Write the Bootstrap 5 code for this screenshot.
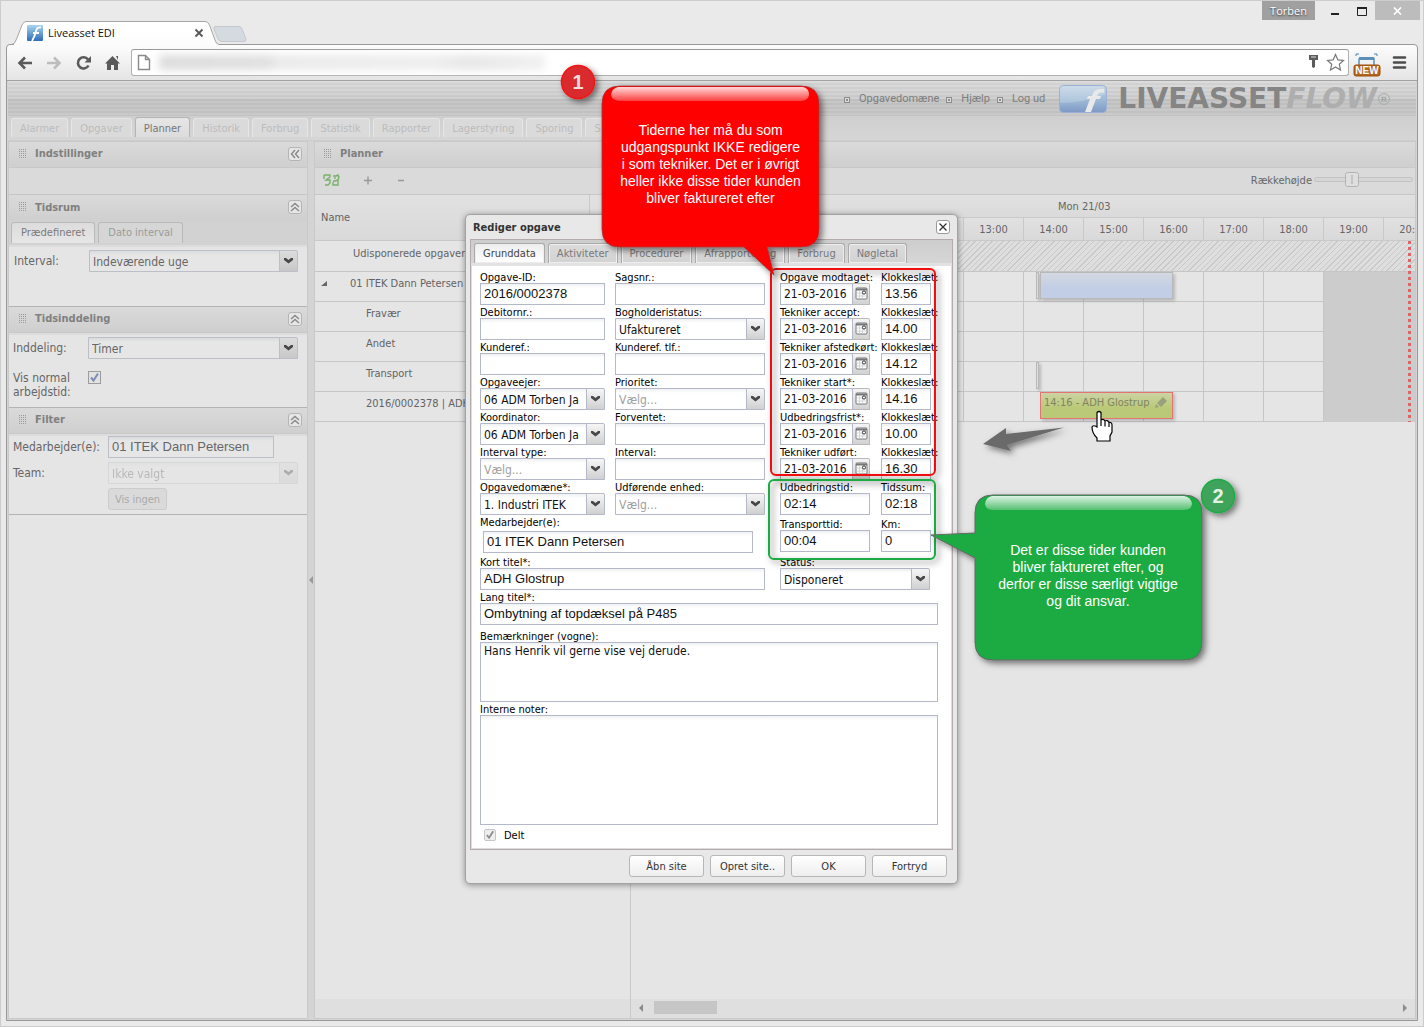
<!DOCTYPE html>
<html lang="da">
<head>
<meta charset="utf-8">
<meta name="viewport" content="width=device-width, initial-scale=1">
<title>Liveasset EDI</title>
<link href="https://cdn.jsdelivr.net/npm/bootstrap@5.3.0/dist/css/bootstrap.min.css" rel="stylesheet">
<style>
:root{--ui:"DejaVu Sans Condensed","DejaVu Sans",sans-serif;--alt:"Liberation Sans",Arial,sans-serif;--line:#c9c9c9;
--chev:url("data:image/svg+xml,%3Csvg xmlns='http://www.w3.org/2000/svg' viewBox='0 0 17 20'%3E%3Cpath d='M4 7h2l2.500 2L11 7h2v2L8.500 12.500 4 9z' fill='%23484848'/%3E%3C/svg%3E")}
body{font:11px/13px var(--ui);color:#666;background:#eaeaea}
button,input,select,textarea{font-family:inherit;border-radius:0}
a{text-decoration:none;color:inherit}
.desktop{border:1px solid #cdcdcd;padding:0 5px 5px;overflow:hidden}
.tabstrip{height:43px}
.btab{font:11px/14px "Open Sans",sans-serif;color:#111;margin-left:6px;width:240px;height:44px;z-index:1}
.btab .cap{padding:24px 0 0 15px;gap:5px}
.wctl .usr{width:53px;height:19px;background:#a0a0a0;color:#fff;font:11px/20px "Open Sans",sans-serif;text-shadow:0 1px 2px #333}
.wctl .cls{width:45px;height:19px;background:#bcbcbc;margin-right:-2px}
.frame{border:1px solid #999;border-radius:4px 4px 0 0;background:#d4d4d4}
.toolbar{height:36px;background:linear-gradient(#fdfdfd,#e4e4e4);border-bottom:1px solid #a3a3a3;padding:0 4px 0 10px;border-radius:4px 4px 0 0}
.addr{height:27px;border:1px solid #b0b0b0;border-top-color:#989898;border-radius:3px;background:#fff;margin:-1px 0 0 10px;padding:0 3px 0 5px}
.smudge{width:386px;height:15px;filter:blur(4px);background:linear-gradient(90deg,#dcdcdc 0,#dfdfdf 28%,#eaeaea 31%,#eee 70%,#e6e6e6 80%,#f0f0f0)}
.app{padding:0 1px 1px}
.apphead{height:35px;background:repeating-linear-gradient(#0000 0 2px,#0000000a 2px 4px),linear-gradient(#dcdcdc,#d0d0d0 50%,#c6c6c6 51%,#cacaca);color:#7d7d7d;padding-right:24px;font:11px/14px Roboto,sans-serif}
.sq{width:6px;height:6px;border:1px solid #8c8c8c;margin:3px 9px 0 7px;background:#8c8c8c;box-shadow:inset 0 0 0 1px #ddd}
.brandt{font:bold 28px/30px "DejaVu Sans",sans-serif;color:#858585}
.brandt i{color:#aeaeae}
.logo{margin:0 11px 0 14px}
.appnav{height:25px;padding:1px 3px 0;gap:3px;background:linear-gradient(#cfcfcf,#d6d6d6);border-bottom:1px solid #cdcdcd}
.atab{height:19px;padding:3px 8px 0;margin-top:1px;border:1px solid #e6e6e6;border-bottom:0;border-radius:3px 3px 0 0;background:#dadada;color:#bcbcbc;white-space:nowrap}
.atab.on{background:linear-gradient(#e6e6e6,#dcdcdc);border-color:#b4b4b4;color:#777;height:20px;margin-top:0;padding-top:4px}
.side{width:300px;background:#e5e5e5;border:1px solid var(--line)}
.gutter{width:6px;background:#d4d4d4}
.ph{height:26px;background:linear-gradient(#dadada,#cfcfcf);border-bottom:1px solid var(--line);font-weight:bold;font-size:11px;color:#808080;padding:0 5px 2px 9px}
.ph.drk{border-top:1px solid #b3b3b3;height:27px}
.grip{width:8px;height:10px;margin-right:9px;background-image:linear-gradient(90deg,#d5d5d5 50%,#0000 0),linear-gradient(#999 50%,#d5d5d5 0);background-size:2px 2px}
.tool{width:14px;height:14px;border:1px solid #b5b5b5;border-radius:3px;background:#e6e6e6;padding:0}
.tool svg{display:block}
.bar27{height:27px;background:#dadada;border-bottom:1px solid #c6c6c6}
.plan .bar27{padding-bottom:2px}
.stabs{height:24px;background:#d2d2d2;padding:1px 2px 0;gap:3px}
.stab{height:21px;border:1px solid #b9b9b9;border-bottom:0;border-radius:3px 3px 0 0;background:#d6d6d6;color:#9b9b9b;font-size:11px;padding:0 9px 2px}
.stab.on{background:linear-gradient(#dcdcdc,#e6e6e6);color:#7a7a7a}
.sbody{padding:2px 9px 8px 4px;font-size:12px;line-height:14px;border-top:2px solid #dcdcdc}
.sbody.range{padding:3px 9px 34px 5px}
.sbody.filt{padding:0 9px 4px 4px;border-bottom:1px solid #b3b3b3}
.k75{flex:0 0 75px}.k95{flex:0 0 95px}
.fld{height:22px;border:1px solid #b5b8c8;background:linear-gradient(#eef0f2,#fff 4px);font:12px/18px var(--ui);color:#111;padding:0 3px;display:block;width:100%}
.fld.al{font:13px/16px var(--alt);padding-bottom:2px}
select.fld{appearance:none;border-radius:0 2px 0 0;padding:1px 20px 0 3px;background:var(--chev) right center/17px 20px no-repeat,linear-gradient(#b5b8c8,#b5b8c8) right 17px top/1px 100% no-repeat,linear-gradient(#f6f6f6,#d0d0d0) right/17px 100% no-repeat,linear-gradient(#eef0f2,#fff 4px)}
.hint{color:#a0a0a0!important}
.side .fld{background-color:#e6e6e6;background-image:linear-gradient(#d9dbdd,#e6e6e6 4px);border-color:#bcbec8;color:#666}
.side select.fld{background-image:var(--chev),linear-gradient(#bcbec8,#bcbec8),linear-gradient(#dcdcdc,#c8c8c8),linear-gradient(#d9dbdd,#e6e6e6 4px)}
.side .off{opacity:.35}
.side .fb{margin-left:95px;width:59px;background:#dadada;border-color:#ccc;color:#aaa}
.tick{appearance:none;width:13px;height:13px;border:1px solid #9c9c9c;margin:0;background:#e2e2e2 url("data:image/svg+xml,%3Csvg xmlns='http://www.w3.org/2000/svg' viewBox='0 0 11 11'%3E%3Cpath d='M2 5.500 4.500 8.500 9 1.500' fill='none' stroke='%237f8db5' stroke-width='2'/%3E%3C/svg%3E")}
.tick.grey{width:12px;height:12px;border-color:#c6c6c6;border-radius:2px;background-color:#eee;filter:grayscale(1)}
.plan{background:#e5e5e5;border:1px solid var(--line);min-width:0}
.locked{width:316px;border-right:1px solid var(--line);color:#636363}
.locked .hd{height:46px;background:linear-gradient(#e1e1e1,#d9d9d9);border-bottom:1px solid var(--line);padding:0 6px}
.locked .hd span{width:269px;border-right:1px solid var(--line)}
.lrow{height:30px;border-bottom:1px solid #c6c6c6;padding:0 0 6px 51px;white-space:nowrap;overflow:hidden}
.lrow.tall{height:31px;padding-left:38px}
.lrow.top{padding-left:6px}
.time{overflow:hidden;color:#666}
.d1{height:23px;background:linear-gradient(#e1e1e1,#dadada);border-bottom:1px solid var(--line);padding-left:427px}
.d2{height:23px;background:linear-gradient(#e1e1e1,#d9d9d9);border-bottom:1px solid var(--line);overflow:hidden}
.d2 span{flex:0 0 60px;border-right:1px solid var(--line);text-align:center;padding-top:5px}
.d2 span:first-child{flex-basis:33px}
.rows{background:repeating-linear-gradient(90deg,#0000 0 59px,#c6c6c6 59px 60px) -27px 0}
.trow{height:30px;border-bottom:1px solid #c6c6c6}
.trow.hatch{height:31px;background:repeating-linear-gradient(135deg,#dedede 0 3px,#c9c9c9 3px 4px)}
.night{left:693px;right:0;top:31px;bottom:0;background:#ccc}
.nowl{left:777px;top:0;bottom:0;width:3px;background:repeating-linear-gradient(#e06464 0 3px,#0000 3px 6px)}
.ev{height:27px;border:1px solid #b8b8b8;box-shadow:2px 2px 3px #0003}
.hscroll{height:19px;background:#dfdfdf;padding:0 7px 2px}
.hscroll i{display:block;width:63px;height:13px;background:#c6c6c6}
.rail{width:99px;height:16px;margin:0 2px}
.dlg{left:464px;top:213px;width:493px;background:#e8e8e8;border:1px solid #a2a2a2;border-radius:5px;box-shadow:0 1px 6px #0006;padding:0 4px;color:#000}
.dlg .ttl{height:24px;font-weight:bold;font-size:11px;color:#333;padding:0 3px}
.ttl .tool{background:#fff;border-color:#999}
.dbody{border:1px solid #b5aaaa;background:#fff;box-shadow:inset 0 0 0 1px #ddd}
.dtabs{height:23px;background:linear-gradient(#cdcdcd,#d6d6d6);padding:3px 3px 0;gap:3px}
.dtab{height:20px;border:1px solid #aaa;border-bottom:0;border-radius:3px 3px 0 0;background:linear-gradient(#dcdcdc,#d2d2d2);box-shadow:inset 0 0 0 1px #eee;color:#777;font-size:11px;padding:0 8px}
.dtab.on{background:linear-gradient(#eee,#fff);color:#444}
.dform{border-top:3px solid #e2e2e2;padding:4px 14px 7px 9px}
.f label{display:block;height:13px;line-height:15px;white-space:nowrap}
.w300{width:300px}.w285{width:285px}.emp{width:270px;margin:3px 0 2px 3px}
.c1{width:125px}.c2{width:150px}.c3{width:90px}.c4{width:50px}
.g10{gap:10px}.g11{gap:11px}
.trip{margin:2px 0 3px}
.dt .fld{width:73px}
.cal{width:17px;height:22px;border:1px solid #b9b9b9;border-left:0;border-radius:0 2px 0 0;background:linear-gradient(#f4f4f4,#d2d2d2);padding:0 0 0 2px}
.cal svg{display:block}
.ta{resize:none;line-height:15px;padding-top:1px}
.fb{width:75px;height:22px;border:1px solid #b7b7b7;border-radius:3px;background:linear-gradient(#fff,#eee);font-size:11px;line-height:13px;color:#333;padding:0}
.acts{gap:6px;padding:5px 6px 6px}
.notes{inset:0;pointer-events:none}
.say{color:#fff;font:14px/17px var(--alt);text-align:center}
.say.one{left:600px;top:121px;width:219px}
.say.two{left:974px;top:541px;width:226px}
</style>
</head>
<body>
<div class="desktop min-vh-100 d-flex flex-column position-relative">

  <div class="tabstrip d-flex justify-content-between">
    <div class="btab position-relative">
      <svg class="position-absolute top-0 start-0" width="245" height="46" viewBox="0 0 245 46"><defs><linearGradient id="tg" x2="0" y2="1"><stop offset=".4" stop-color="#fff"/><stop offset="1" stop-color="#fbfbfb"/></linearGradient></defs><path d="M1 44.500Q3 43 5 37L10 24Q11.500 20.500 14 20.500H193Q196 20.500 197.500 24L203 39Q204 43 207 43.500V46H1z" fill="url(#tg)"/><path d="M0 43.500Q3 43 5 37L10 24Q11.500 20.500 14 20.500H193Q196 20.500 197.500 24L203 39Q204 43 207 43.500" fill="none" stroke="#a6a6a6"/><path d="M203 25.500H227Q229 25.500 230 28L234 38Q234 40.500 232 40.500H210Q207 40.500 206 38L202 28Q201.500 25.500 203 25.500z" fill="#d5dae1" stroke="#c4c8ce"/></svg>
      <div class="cap d-flex align-items-center position-relative">
        <svg width="16" height="16"><defs><linearGradient id="bl" x2="0" y2="1"><stop stop-color="#a8d5f2"/><stop offset="1" stop-color="#2e6db5"/></linearGradient></defs><rect width="16" height="16" rx="1" fill="url(#bl)"/><path d="M5 16Q8 11 9 6 10 2 14 2.500M6 8h6" fill="none" stroke="#fff" stroke-width="1.800"/></svg>
        <span>Liveasset EDI</span>
        <svg class="ms-auto me-5" width="10" height="10"><path d="M1.500 1.500l7 7m0-7l-7 7" stroke="#555" stroke-width="1.800"/></svg>
      </div>
    </div>
    <div class="wctl d-flex">
      <div class="usr text-center">Torben</div>
      <svg width="60" height="22"><path d="M16 13h8" stroke="#222" stroke-width="2"/><path d="M42.500 7v7.500h9V7" fill="none" stroke="#222"/><path d="M42 7h10" stroke="#222" stroke-width="2"/></svg>
      <div class="cls d-flex justify-content-center align-items-center"><svg width="9" height="8"><path d="M1 .5l7 7m0-7l-7 7" stroke="#fff" stroke-width="1.600"/></svg></div>
    </div>
  </div>

  <div class="frame flex-grow-1 d-flex flex-column">
    <div class="toolbar d-flex align-items-center">
      <svg width="104" height="20" fill="none" stroke="#5a5a5a" stroke-width="2.600"><path d="M15 10H3M8 4.500L2.500 10 8 15.500"/><path d="M30 10h12M37 4.500L42.500 10 37 15.500" stroke="#bdbdbd"/><path d="M71 6.500A5.600 5.600 0 1 0 71.500 12.500"/><path d="M74 3v6.500h-6.500z" fill="#5a5a5a" stroke="none"/><path d="M88 10.500L95.500 3l7.500 7.500h-2V17h-4v-5h-3v5h-4v-6.500z M99 3h2v4" fill="#5a5a5a" stroke="none"/></svg>
      <div class="addr flex-grow-1 d-flex align-items-center">
        <svg width="14" height="17"><path d="M1.500 1.500h7l4 4v10h-11zM8.500 1.500v4h4" fill="#fff" stroke="#8a8a8a" stroke-width="1.400"/></svg>
        <div class="smudge ms-2"></div>
        <svg class="ms-auto" width="37" height="18"><path d="M1 2h9v5H7v7l-1.500 1L4 14V7H1z" fill="#5b5b5b"/><path d="M3 4h5" stroke="#ddd"/><path d="M27.500 1.500l2.400 5.400 5.600.600-4.200 3.800 1.200 5.700-5-3-5 3 1.200-5.700-4.200-3.800 5.600-.600z" fill="#fff" stroke="#777" stroke-width="1.200"/></svg>
      </div>
      <svg class="ms-1" width="60" height="28"><path d="M6 9.500h15v10M6 19V9.500" fill="none" stroke="#5b8fb8" stroke-width="1.500"/><path d="M6 8h15v3H6z" fill="#5b8fb8"/><path d="M3 7V5h3M24 7V5h-3" fill="none" stroke="#4a83b1"/><rect x="1" y="16" width="26" height="11" rx="2" fill="#b5651d" stroke="#9a4f0c"/><text x="14" y="25" text-anchor="middle" font-family="Liberation Sans" font-weight="bold" font-size="10" fill="#fff">NEW</text><path d="M41 8.500h11M41 13.500h11M41 18.500h11" stroke="#4d4d4d" stroke-width="2.600" stroke-linecap="round"/></svg>
    </div>

    <div class="app flex-grow-1 d-flex flex-column">
      <div class="apphead d-flex align-items-center justify-content-end">
        <i class="sq"></i><a href="#">Opgavedomæne</a><i class="sq"></i><a href="#">Hjælp</a><i class="sq"></i><a href="#">Log ud</a>
        <svg class="logo" width="48" height="28"><defs><linearGradient id="lg" x2="0" y2="1"><stop stop-color="#c2d3e3"/><stop offset=".55" stop-color="#9db9d6"/><stop offset="1" stop-color="#7d99c4"/></linearGradient></defs><rect x=".5" y=".5" width="47" height="27" rx="4" fill="url(#lg)" stroke="#9ab0d4"/><path d="M1 18Q24 18 46 9V4Q46 1 43 1H4Q1 1 1 4z" fill="#fff" opacity=".2"/><path d="M26 27h6L37 14h4l1-3h-4Q39 8 41 7.500h4V4h-4Q35 4 33 11h-4l-1 3h3z" fill="#e9e9e9"/></svg>
        <div class="brandt">LIVEASSET<i>FLOW</i></div><svg width="15" height="16"><circle cx="7" cy="8" r="5.500" fill="none" stroke="#aaa"/><text x="7" y="11" font-family="Liberation Sans" font-size="8" font-weight="bold" text-anchor="middle" fill="#a2a2a2">R</text></svg>
      </div>
      <nav class="appnav d-flex">
        <a class="atab" href="#">Alarmer</a><a class="atab" href="#">Opgaver</a><a class="atab on" href="#">Planner</a><a class="atab" href="#">Historik</a><a class="atab" href="#">Forbrug</a><a class="atab" href="#">Statistik</a><a class="atab" href="#">Rapporter</a><a class="atab" href="#">Lagerstyring</a><a class="atab" href="#">Sporing</a><a class="atab" href="#">S</a>
      </nav>

      <div class="flex-grow-1 d-flex">
        <aside class="side flex-shrink-0">
          <div class="ph d-flex align-items-center"><i class="grip"></i>Indstillinger<button class="tool ms-auto" aria-label="Skjul"><svg width="12" height="12"><path d="M6 2L2.500 6 6 10M10 2L6.500 6 10 10" fill="none" stroke="#888" stroke-width="1.400"/></svg></button></div>
          <div class="bar27"></div>
          <div class="ph d-flex align-items-center border-bottom-0"><i class="grip"></i>Tidsrum<button class="tool ms-auto" aria-label="Fold sammen"><svg width="12" height="12"><path d="M2 6L6 2.500 10 6M2 10L6 6.500 10 10" fill="none" stroke="#888" stroke-width="1.400"/></svg></button></div>
          <div class="stabs d-flex"><button class="stab on">Prædefineret</button><button class="stab">Dato interval</button></div>
          <div class="sbody range">
            <div class="d-flex align-items-center"><label for="s1" class="k75">Interval:</label><select id="s1" class="fld"><option>Indeværende uge</option></select></div>
          </div>
          <div class="ph drk d-flex align-items-center"><i class="grip"></i>Tidsinddeling<button class="tool ms-auto" aria-label="Fold sammen"><svg width="12" height="12"><path d="M2 6L6 2.500 10 6M2 10L6 6.500 10 10" fill="none" stroke="#888" stroke-width="1.400"/></svg></button></div>
          <div class="sbody">
            <div class="d-flex align-items-center mb-2"><label for="s2" class="k75">Inddeling:</label><select id="s2" class="fld"><option>Timer</option></select></div>
            <div class="d-flex"><label for="s3" class="k75 mt-1">Vis normal arbejdstid:</label><input id="s3" type="checkbox" class="tick mt-1" checked></div>
          </div>
          <div class="ph drk d-flex align-items-center"><i class="grip"></i>Filter<button class="tool ms-auto" aria-label="Fold sammen"><svg width="12" height="12"><path d="M2 6L6 2.500 10 6M2 10L6 6.500 10 10" fill="none" stroke="#888" stroke-width="1.400"/></svg></button></div>
          <div class="sbody filt">
            <div class="d-flex align-items-center mb-1 pe-4"><label for="s4" class="k95">Medarbejder(e):</label><input id="s4" class="fld al" value="01 ITEK Dann Petersen"></div>
            <div class="d-flex align-items-center mb-1"><label for="s5" class="k95">Team:</label><select id="s5" class="fld off" disabled><option>Ikke valgt</option></select></div>
            <button class="fb" disabled>Vis ingen</button>
          </div>
        </aside>
        <div class="gutter d-flex align-items-center"><svg width="6" height="8"><path d="M5 0v8L1 4z" fill="#999"/></svg></div>

        <section class="plan flex-grow-1 d-flex flex-column">
          <div class="ph d-flex align-items-center ps-2"><i class="grip"></i>Planner</div>
          <div class="bar27 d-flex align-items-center ps-2">
            <svg width="17" height="12" fill="none" stroke="#7bb06b" stroke-width="1.400"><path d="M1 1h6v2L3 6h4v3L5 11H2M1 1v4M10 2h3l2-1 1 2-1 3-3 1h-2M15 6v5h-5V8M12 3v2"/></svg>
            <svg class="ms-4" width="50" height="12"><path d="M0 6.500h8M4 2.500v8M34 6.500h6" stroke="#999" stroke-width="1.400"/></svg>
            <label for="rh" class="ms-auto">Rækkehøjde</label>
            <div class="rail position-relative"><input id="rh" type="range" value="38" class="opacity-0 position-absolute w-100"><svg width="99" height="16"><rect x=".5" y="5.500" width="98" height="4" rx="2" fill="#d6d6d6" stroke="#c2c2c2"/><rect x="31.500" y=".5" width="13" height="14" rx="2" fill="#dedede" stroke="#b3b3b3"/><path d="M38 3v9" stroke="#aaa"/></svg></div>
          </div>
          <div class="d-flex flex-grow-1">
            <div class="locked flex-shrink-0 d-flex flex-column">
              <div class="hd d-flex"><span class="d-flex align-items-center">Name</span></div>
              <div class="lrow tall d-flex align-items-center">Udisponerede opgaver</div>
              <div class="lrow top d-flex align-items-center"><svg width="29" height="7"><path d="M6 1v5H0z" fill="#666"/></svg>01 ITEK Dann Petersen</div>
              <div class="lrow d-flex align-items-center">Fravær</div>
              <div class="lrow d-flex align-items-center">Andet</div>
              <div class="lrow d-flex align-items-center">Transport</div>
              <div class="lrow d-flex align-items-center">2016/0002378 | ADH Glostrup</div>
              <div class="hscroll mt-auto"></div>
            </div>
            <div class="time flex-grow-1 d-flex flex-column">
              <div class="d1 d-flex align-items-center">Mon 21/03</div>
              <div class="d2 d-flex"><span></span><span>08:00</span><span>09:00</span><span>10:00</span><span>11:00</span><span>12:00</span><span>13:00</span><span>14:00</span><span>15:00</span><span>16:00</span><span>17:00</span><span>18:00</span><span>19:00</span><span>20:00</span></div>
              <div class="rows position-relative">
                <div class="night position-absolute"></div>
                <div class="trow hatch"></div><div class="trow"></div><div class="trow"></div><div class="trow"></div><div class="trow"></div><div class="trow"></div>
                <div class="nowl position-absolute"></div>
                <div class="ev position-absolute" style="left:405px;top:31px;width:3px;background:#d6dbe4"></div>
                <div class="ev position-absolute" style="left:409px;top:31px;width:133px;background:linear-gradient(#d4d9e1,#c2cee5 60%)"></div>
                <div class="ev position-absolute" style="left:405px;top:121px;width:3px;background:#e0e0d0"></div>
                <div class="ev position-absolute d-flex" style="left:409px;top:151px;width:133px;padding:3px;border-color:#e57373;background:linear-gradient(#ccd3a4,#bac977 60%);white-space:nowrap;color:#80845f">14:16 - ADH Glostrup<svg class="ms-auto flex-shrink-0" width="15" height="14"><path d="M1 12l1-4 3 3zM3 7l6-6 4 4-6 6z" fill="#99a07a"/></svg></div>
              </div>
              <div class="hscroll mt-auto d-flex align-items-center"><svg width="16" height="8"><path d="M5 0v8L1 4z" fill="#8a8a8a"/></svg><i></i><svg class="ms-auto" width="6" height="8"><path d="M1 0v8l4-4z" fill="#8a8a8a"/></svg></div>
            </div>
          </div>
        </section>
      </div>
    </div>
  </div>

  <form class="dlg position-absolute">
    <div class="ttl d-flex align-items-center">Rediger opgave<button type="button" class="tool ms-auto" aria-label="Luk"><svg width="12" height="12"><path d="M2.500 2.500l7 7m0-7l-7 7" stroke="#333" stroke-width="1.300"/></svg></button></div>
    <div class="dbody">
      <div class="dtabs d-flex"><button type="button" class="dtab on">Grunddata</button><button type="button" class="dtab">Aktiviteter</button><button type="button" class="dtab">Procedurer</button><button type="button" class="dtab">Afrapportering</button><button type="button" class="dtab">Forbrug</button><button type="button" class="dtab">Nøgletal</button></div>
      <div class="dform">
        <div class="d-flex">
          <div class="w300">
            <div class="d-flex g10">
              <div class="c1 f">
                <label for="a1">Opgave-ID:</label><input id="a1" class="fld al" value="2016/0002378">
                <label for="a2">Debitornr.:</label><input id="a2" class="fld al">
                <label for="a3">Kunderef.:</label><input id="a3" class="fld al">
                <label for="a4">Opgaveejer:</label><select id="a4" class="fld"><option>06 ADM Torben Ja</option></select>
                <label for="a5">Koordinator:</label><select id="a5" class="fld"><option>06 ADM Torben Ja</option></select>
                <label for="a6">Interval type:</label><select id="a6" class="fld hint"><option>Vælg...</option></select>
                <label for="a7">Opgavedomæne*:</label><select id="a7" class="fld"><option>1. Industri ITEK</option></select>
              </div>
              <div class="c2 f">
                <label for="b1">Sagsnr.:</label><input id="b1" class="fld al">
                <label for="b2">Bogholderistatus:</label><select id="b2" class="fld"><option>Ufaktureret</option></select>
                <label for="b3">Kunderef. tlf.:</label><input id="b3" class="fld al">
                <label for="b4">Prioritet:</label><select id="b4" class="fld hint"><option>Vælg...</option></select>
                <label for="b5">Forventet:</label><input id="b5" class="fld al">
                <label for="b6">Interval:</label><input id="b6" class="fld al">
                <label for="b7">Udførende enhed:</label><select id="b7" class="fld hint"><option>Vælg...</option></select>
              </div>
            </div>
            <div class="f"><label for="a8">Medarbejder(e):</label><input id="a8" class="fld al emp" value="01 ITEK Dann Petersen"></div>
            <div class="f w285"><label for="a9">Kort titel*:</label><input id="a9" class="fld al" value="ADH Glostrup"></div>
          </div>
          <div>
            <div class="d-flex g11">
              <div class="c3 f dt">
                <label for="d1">Opgave modtaget:</label><div class="d-flex"><input id="d1" class="fld" value="21-03-2016"><button type="button" class="cal" aria-label="Kalender"><svg width="13" height="14"><use href="#calico"/></svg></button></div>
                <label for="d2">Tekniker accept:</label><div class="d-flex"><input id="d2" class="fld" value="21-03-2016"><button type="button" class="cal" aria-label="Kalender"><svg width="13" height="14"><use href="#calico"/></svg></button></div>
                <label for="d3">Tekniker afstedkørt:</label><div class="d-flex"><input id="d3" class="fld" value="21-03-2016"><button type="button" class="cal" aria-label="Kalender"><svg width="13" height="14"><use href="#calico"/></svg></button></div>
                <label for="d4">Tekniker start*:</label><div class="d-flex"><input id="d4" class="fld" value="21-03-2016"><button type="button" class="cal" aria-label="Kalender"><svg width="13" height="14"><use href="#calico"/></svg></button></div>
                <label for="d5">Udbedringsfrist*:</label><div class="d-flex"><input id="d5" class="fld" value="21-03-2016"><button type="button" class="cal" aria-label="Kalender"><svg width="13" height="14"><use href="#calico"/></svg></button></div>
                <label for="d6">Tekniker udført:</label><div class="d-flex"><input id="d6" class="fld" value="21-03-2016"><button type="button" class="cal" aria-label="Kalender"><svg width="13" height="14"><use href="#calico"/></svg></button></div>
              </div>
              <div class="c4 f">
                <label for="k1">Klokkeslæt:</label><input id="k1" class="fld al" value="13.56">
                <label for="k2">Klokkeslæt:</label><input id="k2" class="fld al" value="14.00">
                <label for="k3">Klokkeslæt:</label><input id="k3" class="fld al" value="14.12">
                <label for="k4">Klokkeslæt:</label><input id="k4" class="fld al" value="14.16">
                <label for="k5">Klokkeslæt:</label><input id="k5" class="fld al" value="10.00">
                <label for="k6">Klokkeslæt:</label><input id="k6" class="fld al" value="16.30">
              </div>
            </div>
            <div class="d-flex f g11"><div class="c3"><label for="u1">Udbedringstid:</label><input id="u1" class="fld al" value="02:14"></div><div class="c4"><label for="u2">Tidssum:</label><input id="u2" class="fld al" value="02:18"></div></div>
            <div class="d-flex f g11 trip"><div class="c3"><label for="u3">Transporttid:</label><input id="u3" class="fld al" value="00:04"></div><div class="c4"><label for="u4">Km:</label><input id="u4" class="fld al" value="0"></div></div>
            <div class="c2 f"><label for="u5">Status:</label><select id="u5" class="fld"><option>Disponeret</option></select></div>
          </div>
        </div>
        <div class="f"><label for="l1">Lang titel*:</label><input id="l1" class="fld al" value="Ombytning af topdæksel på P485"></div>
        <div class="f pt-1"><label for="l2">Bemærkninger (vogne):</label><textarea id="l2" class="fld ta" style="height:60px">Hans Henrik vil gerne vise vej derude.</textarea></div>
        <div class="f"><label for="l3">Interne noter:</label><textarea id="l3" class="fld ta" style="height:110px"></textarea></div>
        <div class="d-flex align-items-start ps-1 pt-1 gap-2"><input id="l4" type="checkbox" class="tick grey" checked disabled><label for="l4">Delt</label></div>
      </div>
    </div>
    <div class="acts d-flex justify-content-end"><button type="button" class="fb">Åbn site</button><button type="button" class="fb">Opret site..</button><button type="button" class="fb">OK</button><button type="button" class="fb">Fortryd</button></div>
  </form>

  <div class="notes position-absolute">
    <svg class="position-absolute overflow-visible" width="1424" height="1027" viewBox="1 1 1424 1027">
      <defs>
        <g id="calico"><rect x="1" y="1" width="11" height="11" rx="1" fill="#fff" stroke="#777"/><path d="M1 2.500h11" stroke="#777" stroke-width="2"/><path d="M2 6h9M2 9h9M4.500 4v8M7.500 4v8" stroke="#ccc" stroke-width=".8"/><circle cx="9" cy="5.500" r="1.600" fill="#fff" stroke="#333"/></g>
        <filter id="sh" x="-20%" y="-20%" width="150%" height="150%"><feDropShadow dx="3" dy="3" stdDeviation="3" flood-opacity=".5"/></filter>
        <linearGradient id="gl" x2="0" y2="1"><stop stop-color="#fff" stop-opacity=".85"/><stop offset="1" stop-color="#fff" stop-opacity=".25"/></linearGradient>
      </defs>
      <g fill="none" stroke-width="2" filter="url(#sh)"><rect x="771" y="269" width="164" height="206" rx="5" stroke="#f01010"/><rect x="769" y="480" width="166" height="79" rx="5" stroke="#1bab42"/></g>
      <g filter="url(#sh)">
        <path d="M620 86H801Q819 86 819 104V229Q819 247 801 247H767L774 275 744 247H620Q602 247 602 229V104Q602 86 620 86z" fill="#fe0000" stroke="#a33" stroke-width=".8"/>
        <path d="M993 495H1184Q1202 495 1202 513V642Q1202 660 1184 660H993Q975 660 975 642V558L931 535 975 533V513Q975 495 993 495z" fill="#1bab42" stroke="#666"/>
        <path d="M983 444L1006 428V434L1064 427.500 1007 445 1011 451z" fill="#6b6b6b"/>
        <circle cx="578" cy="82" r="16.500" fill="#d92b2e" stroke="#f01818" stroke-width="1.500"/>
        <circle cx="1218" cy="496" r="16.500" fill="#41a35c" stroke="#1bab42" stroke-width="1.500"/>
      </g>
      <path d="M618 87H803Q809 88 809 95 808 101 800 101H622Q612 101 611 95 612 88 618 87z" fill="url(#gl)"/>
      <path d="M992 496H1184Q1191 497 1192 504 1191 510 1184 510H993Q986 510 985 504 986 497 992 496z" fill="url(#gl)"/>
      <text x="578" y="89" text-anchor="middle" font-family="Liberation Sans" font-size="20" font-weight="bold" fill="#f3dcdc">1</text>
      <text x="1218" y="503" text-anchor="middle" font-family="Liberation Sans" font-size="20" font-weight="bold" fill="#e2f3e6">2</text>
      <path d="M1097 412.500Q1099 410.500 1101 412.500V420Q1103.500 418.500 1105 421 1107.500 419.500 1109 422.500 1112 422 1112 425V432L1110 436V441H1097V438Q1092 433 1092 427 1093 424.500 1097 427zM1101 420v6M1105 421v5.500M1109 422.500v4.500" fill="#fff" stroke="#000" stroke-width="1.200"/>
    </svg>
    <div class="say one position-absolute">Tiderne her må du som<br>udgangspunkt IKKE redigere<br>i som tekniker. Det er i øvrigt<br>heller ikke disse tider kunden<br>bliver faktureret efter</div>
    <div class="say two position-absolute">Det er disse tider kunden<br>bliver faktureret efter, og<br>derfor er disse særligt vigtige<br>og dit ansvar.</div>
  </div>
</div>
<script src="https://cdn.jsdelivr.net/npm/bootstrap@5.3.0/dist/js/bootstrap.bundle.min.js"></script>
</body>
</html>
